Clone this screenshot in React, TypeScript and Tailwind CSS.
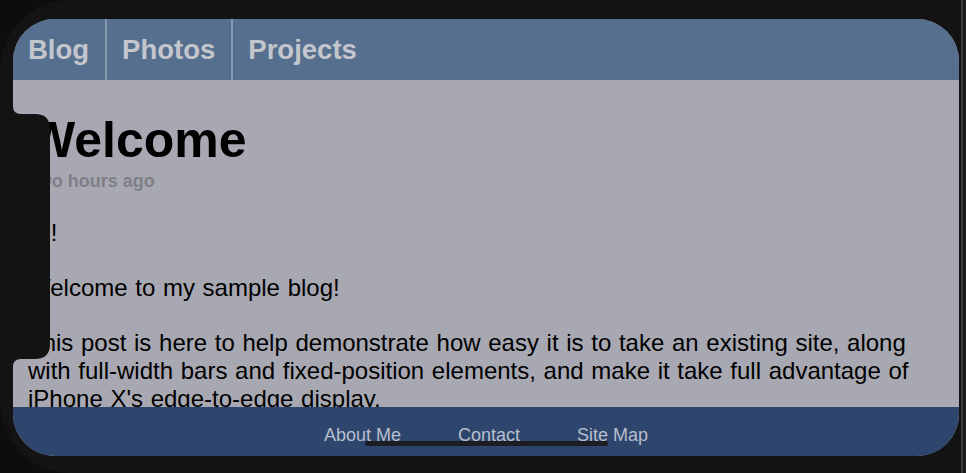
import React from "react";

const navLinks = ["Blog", "Photos", "Projects"];
const footerLinks = ["About Me", "Contact", "Site Map"];

// the sensor housing, drawn over the left edge of the screen (landscape)
const Notch = () => (
  <svg
    className="absolute left-0 top-[87px] z-20"
    width="40"
    height="262"
    viewBox="0 0 40 262"
  >
    <path
      d="M0 0 Q0 8 8 8 L22 8 Q37 8 37 23 L37 238 Q37 253 22 253 L8 253 Q0 253 0 261 Z"
      fill="#131313"
    />
  </svg>
);

const App: React.FC = () => {
  return (
    <div
      className="w-[966px] h-[473px] flex bg-[#0d0d0d] overflow-hidden"
      style={{ fontFamily: '"Liberation Sans", Arial, sans-serif' }}
    >
      <div className="w-[961px] h-full rounded-l-[70px] bg-[#131313] pl-[13px] pt-[19px]">
        <div className="relative w-[946px] h-[437px] rounded-[42px] overflow-hidden flex flex-col bg-[#a8a8b2]">
          <nav className="h-[61px] shrink-0 flex bg-[#566f8e]">
            {navLinks.map((link, i) => (
              <a
                key={link}
                href="#"
                className={
                  i < navLinks.length - 1
                    ? "flex items-center pl-[15px] pr-[16px] border-r-2 border-[#8797ad] text-[27.5px] font-bold text-[#c3c6cc]"
                    : "flex items-center pl-[15px] pr-[16px] text-[27.5px] font-bold text-[#c3c6cc]"
                }
              >
                {link}
              </a>
            ))}
          </nav>

          <main className="flex-1 overflow-hidden pl-[15px] pr-[15px] pt-[35px]">
            <h1 className="text-[50px] leading-none font-bold text-black">Welcome</h1>
            <p className="mt-[7px] text-[18px] leading-none font-bold text-[#7f7f87]">
              Two hours ago
            </p>
            <div className="mt-[29px] text-[24px] leading-[28px] text-black flex flex-col gap-[27px] whitespace-nowrap [word-spacing:1px]">
              <p>Hi!</p>
              <p>Welcome to my sample blog!</p>
              <p>
                This post is here to help demonstrate how easy it is to take an existing site, along
                <br />
                with full-width bars and fixed-position elements, and make it take full advantage of
                <br />
                iPhone X's edge-to-edge display.
              </p>
            </div>
          </main>

          <footer className="h-[49px] shrink-0 flex justify-center gap-[57px] pt-[19px] bg-[#2e466e]">
            {footerLinks.map((link) => (
              <a key={link} href="#" className="text-[18px] leading-none text-[#b7bfcc]">
                {link}
              </a>
            ))}
          </footer>

          <Notch />
          {/* home indicator */}
          <div className="absolute left-[352px] top-[422px] w-[243px] h-[5px] rounded-full bg-[#1c1d22] z-20" />
        </div>
      </div>
      <div className="w-[2px] h-full bg-[#3a3a3a]" />
      <div className="flex-1 h-full bg-[#1a1a1a]" />
    </div>
  );
};

export default App;
